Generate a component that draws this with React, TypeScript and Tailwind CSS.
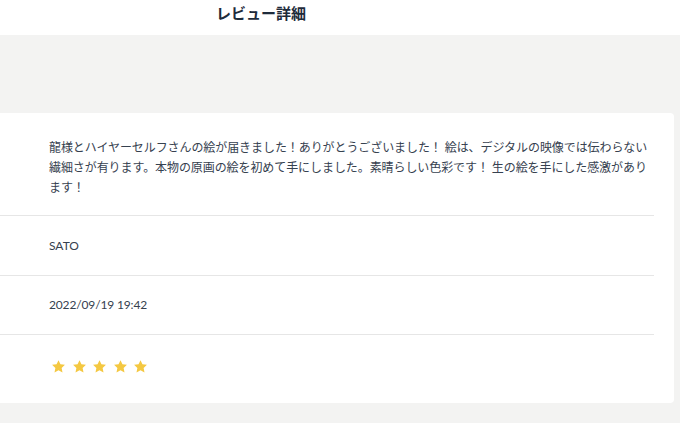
import React from "react";

const font = { fontFamily: '"Lato", "Noto Sans CJK JP", sans-serif' };

function Star() {
    return (
        <svg width="15" height="15" viewBox="0 0 24 24" className="shrink-0">
            <path
                d="M12 1.8l3.1 6.6 7.2.9-5.3 5 1.4 7.1L12 17.9l-6.4 3.5 1.4-7.1-5.3-5 7.2-.9z"
                fill="#f4c842"
            />
        </svg>
    );
}

export default function App() {
    return (
        <div className="min-h-[423px] w-full bg-[#f3f3f2] text-[#36414f]" style={font}>
            <header className="h-[35px] bg-white pl-[216px]">
                <h1 className="pt-[1px] text-[15px] font-semibold leading-[24px] text-[#1e2b3b]">
                    レビュー詳細
                </h1>
            </header>

            <div className="h-[78px]" />

            <section className="mr-[6px] rounded-r-[4px] bg-white pr-[20px]">
                <div className="border-b border-[#e6e6e6] pl-[49px] pt-[25px] pb-[17px] text-[12px] leading-[20px] tracking-[-0.08px]">
                    龍様とハイヤーセルフさんの絵が届きました！ありがとうございました！ 絵は、デジタルの映像では伝わらない繊細さが有ります。本物の原画の絵を初めて手にしました。素晴らしい色彩です！ 生の絵を手にした感激があります！
                </div>
                <div className="flex h-[60px] items-center border-b border-[#e6e6e6] pl-[49px] text-[12px]">
                    SATO
                </div>
                <div className="flex h-[59px] items-center border-b border-[#e6e6e6] pl-[49px] text-[12px] tracking-[-0.15px]">
                    2022/09/19 19:42
                </div>
                <div className="flex h-[68px] items-start gap-[5.5px] pl-[51px] pt-[24px]">
                    <Star />
                    <Star />
                    <Star />
                    <Star />
                    <Star />
                </div>
            </section>
        </div>
    );
}
